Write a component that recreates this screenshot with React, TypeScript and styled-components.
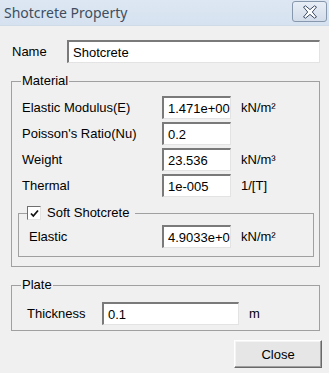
import React from 'react';
import styled, { createGlobalStyle } from 'styled-components';

const GlobalStyle = createGlobalStyle`
  html, body {
    margin: 0;
    padding: 0;
    background: #f0f0f0;
  }
  body {
    font-family: 'Liberation Sans', Arial, sans-serif;
    font-size: 13px;
    color: #000;
  }
`;

interface RowData {
  label: string;
  value: string;
  unit?: string;
}

const materialRows: RowData[] = [
  { label: 'Elastic Modulus(E)', value: '1.471e+00', unit: 'kN/m²' },
  { label: "Poisson's Ratio(Nu)", value: '0.2' },
  { label: 'Weight', value: '23.536', unit: 'kN/m³' },
  { label: 'Thermal', value: '1e-005', unit: '1/[T]' },
];

export default function App() {
  return (
    <>
      <GlobalStyle />
      <Window>
        <TitleBar>
          <Title>Shotcrete Property</Title>
          <CloseX aria-label="close">
            <svg width="16" height="14" viewBox="0 0 16 14">
              <path
                d="M1.5 2 L3.5 0.8 L8 4.6 L12.5 0.8 L14.5 2 L10.3 7 L14.5 12 L12.5 13.2 L8 9.4 L3.5 13.2 L1.5 12 L5.7 7 Z"
                fill="#fff"
                stroke="#3d4d66"
                strokeWidth="1"
                strokeLinejoin="round"
              />
            </svg>
          </CloseX>
        </TitleBar>

        <Body>
          <NameRow>
            <NameLabel>Name</NameLabel>
            <Field readOnly value="Shotcrete" width={253} />
          </NameRow>

          <Group padLeft={10} padRight={5} padTop={7} padBottom={9} marginTop={10}>
            <Legend offset={-1}>Material</Legend>
            <Rows>
              {materialRows.map((r) => (
                <Row key={r.label}>
                  <RowLabel width={140}>{r.label}</RowLabel>
                  <Field readOnly value={r.value} width={69} />
                  {r.unit && <Unit>{r.unit}</Unit>}
                </Row>
              ))}
            </Rows>

            <Group padLeft={10} padRight={5} padTop={4} padBottom={8} marginTop={8} marginLeft={-4}>
              <CheckLegend>
                <CheckBox>
                  <svg width="9" height="9" viewBox="0 0 9 9">
                    <path d="M1 4.5 L3.3 7 L8 1.5" fill="none" stroke="#111" strokeWidth="1.8" />
                  </svg>
                </CheckBox>
                Soft Shotcrete
              </CheckLegend>
              <Row>
                <RowLabel width={133}>Elastic</RowLabel>
                <Field readOnly value="4.9033e+0" width={69} />
                <Unit>kN/m²</Unit>
              </Row>
            </Group>
          </Group>

          <Group padLeft={15} padRight={5} padTop={9} padBottom={5} marginTop={10}>
            <Legend offset={-6}>Plate</Legend>
            <Row>
              <RowLabel width={75}>Thickness</RowLabel>
              <Field readOnly value="0.1" width={137} />
              <Unit>m</Unit>
            </Row>
          </Group>

          <Footer>
            <Button>Close</Button>
          </Footer>
        </Body>
      </Window>
    </>
  );
}

const Window = styled.div`
  width: 329px;
  height: 373px;
  background: #f0f0f0;
  overflow: hidden;
`;

const TitleBar = styled.div`
  height: 26px;
  display: flex;
  align-items: flex-start;
  justify-content: space-between;
  background: linear-gradient(#dde7f3, #d6e2f0);
  border-bottom: 1px solid #d0dbe8;
  box-sizing: border-box;
`;

const Title = styled.div`
  font-family: 'Noto Sans', 'Liberation Sans', sans-serif;
  font-size: 14px;
  line-height: 25px;
  color: #3e4e60;
  padding-left: 4px;
`;

const CloseX = styled.div`
  width: 35px;
  height: 21px;
  margin-top: 1px;
  margin-right: 2px;
  box-sizing: border-box;
  border: 1px solid #8797ac;
  border-radius: 3px;
  background: linear-gradient(#e8eef6, #d3dcea);
  display: flex;
  align-items: center;
  justify-content: center;
`;

const Body = styled.div`
  padding: 0 9px 0 11px;
`;

const NameRow = styled.div`
  display: flex;
  align-items: center;
  margin-top: 14px;
  height: 23px;
`;

const NameLabel = styled.div`
  width: 56px;
  padding-left: 1px;
  box-sizing: border-box;
`;

const Field = styled.input<{ width: number }>`
  width: ${(p) => p.width}px;
  height: 23px;
  box-sizing: border-box;
  margin: 0;
  padding: 0 0 0 4px;
  font-family: 'Liberation Sans', Arial, sans-serif;
  font-size: 13px;
  color: #000;
  background: #fff;
  border-style: solid;
  border-width: 2px 1px 1px 2px;
  border-color: #7a7a7a #e3e3e3 #e3e3e3 #7a7a7a;
  outline: none;
`;

const Group = styled.fieldset<{
  padLeft: number;
  padRight: number;
  padTop: number;
  padBottom: number;
  marginTop: number;
  marginLeft?: number;
}>`
  margin: ${(p) => p.marginTop}px 0 0 ${(p) => p.marginLeft ?? 0}px;
  padding: ${(p) => p.padTop}px ${(p) => p.padRight}px ${(p) => p.padBottom}px
    ${(p) => p.padLeft}px;
  border: 1px solid #a0a0a0;
  min-width: 0;
`;

const Legend = styled.legend<{ offset: number }>`
  padding: 0 1px;
  margin-left: ${(p) => p.offset}px;
  line-height: 16px;
`;

const CheckLegend = styled.legend`
  display: flex;
  align-items: center;
  gap: 6px;
  padding: 0 6px 0 0;
  margin-left: -2px;
  line-height: 16px;
`;

const CheckBox = styled.span`
  width: 14px;
  height: 14px;
  box-sizing: border-box;
  background: #fff;
  border-style: solid;
  border-width: 1px;
  border-color: #6f6f6f #e3e3e3 #e3e3e3 #6f6f6f;
  display: flex;
  align-items: center;
  justify-content: center;
`;

const Rows = styled.div`
  display: flex;
  flex-direction: column;
  gap: 3px;
`;

const Row = styled.div`
  display: flex;
  align-items: center;
  height: 23px;
`;

const RowLabel = styled.div<{ width: number }>`
  width: ${(p) => p.width}px;
  flex: none;
`;

const Unit = styled.div`
  margin-left: 10px;
`;

const Footer = styled.div`
  display: flex;
  justify-content: flex-end;
  margin-top: 9px;
  margin-right: -2px;
`;

const Button = styled.button`
  width: 88px;
  height: 28px;
  box-sizing: border-box;
  font-family: 'Liberation Sans', Arial, sans-serif;
  font-size: 13px;
  color: #000;
  background: #e6e6e6;
  border-style: solid;
  border-width: 1px;
  border-color: #fff #696969 #696969 #fff;
  box-shadow: inset -1px -1px 0 #a0a0a0, inset 1px 1px 0 #f4f4f4;
  padding: 0;
`;
